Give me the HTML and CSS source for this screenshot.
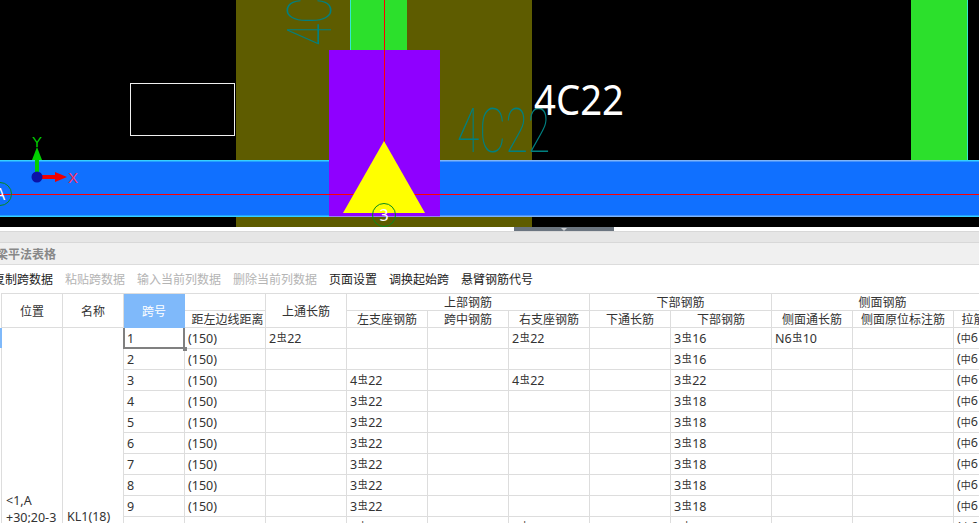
FILE: index.html
```html
<!DOCTYPE html>
<html lang="zh-CN">
<head>
    <meta charset="UTF-8">
    <title>梁平法表格</title>
    <link rel="stylesheet" href="styles.css">
</head>
<body>
    <svg class="canvas" width="979" height="227" viewBox="0 0 979 227">
        <rect class="bg" x="0" y="0" width="979" height="227"/>
        <rect class="olive" x="236" y="0" width="296" height="227"/>
        <rect class="column" x="351" y="0" width="56" height="52"/>
        <rect class="column-edge" x="350" y="0" width="1" height="52"/>
        <rect class="column" x="911" y="0" width="56" height="162"/>
        <rect class="column-edge" x="967" y="0" width="1" height="162"/>
        <text class="cad-text" transform="translate(331 46) rotate(-90)" textLength="93" lengthAdjust="spacingAndGlyphs">4C22</text>
        <text class="cad-text" x="457" y="152" textLength="93" lengthAdjust="spacingAndGlyphs">4C22</text>
        <rect class="beam" x="0" y="160" width="979" height="57"/>
        <rect class="beam-edge" x="0" y="160" width="330" height="1.5"/>
        <rect class="beam-edge" x="0" y="215.5" width="330" height="1.5"/>
        <rect class="beam-edge-soft" x="440" y="160" width="500" height="1.5"/>
        <rect class="beam-edge-soft" x="440" y="215.5" width="500" height="1.5"/>
        <rect class="beam-edge" x="940" y="160" width="39" height="1.5"/>
        <rect class="beam-edge" x="940" y="215.5" width="39" height="1.5"/>
        <rect class="purple" x="329" y="50" width="111" height="167"/>
        <rect class="purple-edge" x="329" y="216" width="111" height="1"/>
        <line class="axis-line" x1="384.5" y1="0" x2="384.5" y2="142"/>
        <line class="axis-line" x1="0" y1="194.5" x2="979" y2="194.5"/>
        <polygon class="yellow" points="384,141 425,213 343,213"/>
        <rect class="selection" x="130.5" y="83.5" width="104" height="52"/>

        <circle class="grid-bubble" cx="0" cy="194" r="11.5"/>
        <text class="bubble-text" x="0" y="200">A</text>
        <circle class="grid-bubble" cx="384" cy="215" r="11.5"/>
        <text class="bubble-text" x="384" y="221">3</text>

        <rect class="arrow-green" x="35" y="158" width="4" height="16"/>
        <polygon class="arrow-green" points="37,147 42,160 32,160"/>
        <rect class="arrow-red" x="41" y="175" width="15" height="4"/>
        <polygon class="arrow-red" points="67,177 55,172 55,182"/>
        <circle class="origin" cx="37" cy="177" r="5.5"/>
        <text class="axis-y" x="37" y="147">Y</text>
        <text class="axis-x" x="73" y="183">X</text>

        <text class="label" x="534" y="115" textLength="90" lengthAdjust="spacingAndGlyphs">4C22</text>
    </svg>

    <div class="splitter"><div class="handle"></div></div>
    <div class="strip"></div>
    <div class="panel-title">梁平法表格</div>

    <div class="toolbar">
        <span>复制跨数据</span>
        <span class="off">粘贴跨数据</span>
        <span class="off">输入当前列数据</span>
        <span class="off">删除当前列数据</span>
        <span>页面设置</span>
        <span>调换起始跨</span>
        <span>悬臂钢筋代号</span>
    </div>

    <div class="table-wrap">
        <div class="row-mark"></div>
        <table class="grid">
            <colgroup>
                <col class="w61"><col class="w61"><col class="w61">
                <col class="w81"><col class="w81"><col class="w81"><col class="w81"><col class="w81"><col class="w81">
                <col class="w101"><col class="w81"><col class="w101"><col class="w40">
            </colgroup>
            <thead>
                <tr>
                    <th rowspan="2" class="tall">位置</th>
                    <th rowspan="2" class="tall">名称</th>
                    <th rowspan="2" class="tall active">跨号</th>
                    <th></th>
                    <th rowspan="2" class="tall">上通长筋</th>
                    <th colspan="3">上部钢筋</th>
                    <th colspan="2">下部钢筋</th>
                    <th colspan="3">侧面钢筋</th>
                </tr>
                <tr>
                    <th class="shift">距左边线距离</th>
                    <th>左支座钢筋</th>
                    <th>跨中钢筋</th>
                    <th>右支座钢筋</th>
                    <th>下通长筋</th>
                    <th>下部钢筋</th>
                    <th>侧面通长筋</th>
                    <th>侧面原位标注筋</th>
                    <th>拉筋</th>
                </tr>
            </thead>
            <tbody>
                <tr>
                    <td rowspan="18" class="place">&lt;1,A<br>+30;20-3<br>00&gt;</td>
                    <td rowspan="18">KL1(18)</td>
                    <td class="selected">1</td><td>(150)</td><td>2<i>虫</i>22</td><td></td><td></td><td>2<i>虫</i>22</td><td></td><td>3<i>虫</i>16</td><td>N6<i>虫</i>10</td><td></td><td>(<b>中</b>6</td>
                </tr>
                <tr><td>2</td><td>(150)</td><td></td><td></td><td></td><td></td><td></td><td>3<i>虫</i>16</td><td></td><td></td><td>(<b>中</b>6</td></tr>
                <tr><td>3</td><td>(150)</td><td></td><td>4<i>虫</i>22</td><td></td><td>4<i>虫</i>22</td><td></td><td>3<i>虫</i>22</td><td></td><td></td><td>(<b>中</b>6</td></tr>
                <tr><td>4</td><td>(150)</td><td></td><td>3<i>虫</i>22</td><td></td><td></td><td></td><td>3<i>虫</i>18</td><td></td><td></td><td>(<b>中</b>6</td></tr>
                <tr><td>5</td><td>(150)</td><td></td><td>3<i>虫</i>22</td><td></td><td></td><td></td><td>3<i>虫</i>18</td><td></td><td></td><td>(<b>中</b>6</td></tr>
                <tr><td>6</td><td>(150)</td><td></td><td>3<i>虫</i>22</td><td></td><td></td><td></td><td>3<i>虫</i>18</td><td></td><td></td><td>(<b>中</b>6</td></tr>
                <tr><td>7</td><td>(150)</td><td></td><td>3<i>虫</i>22</td><td></td><td></td><td></td><td>3<i>虫</i>18</td><td></td><td></td><td>(<b>中</b>6</td></tr>
                <tr><td>8</td><td>(150)</td><td></td><td>3<i>虫</i>22</td><td></td><td></td><td></td><td>3<i>虫</i>18</td><td></td><td></td><td>(<b>中</b>6</td></tr>
                <tr><td>9</td><td>(150)</td><td></td><td>3<i>虫</i>22</td><td></td><td></td><td></td><td>3<i>虫</i>18</td><td></td><td></td><td>(<b>中</b>6</td></tr>
                <tr><td>10</td><td>(150)</td><td></td><td>3<i>虫</i>22</td><td></td><td>3<i>虫</i>22</td><td></td><td>3<i>虫</i>18</td><td></td><td></td><td>(<b>中</b>6</td></tr>
                <tr><td>11</td><td>(150)</td><td></td><td></td><td></td><td></td><td></td><td></td><td></td><td></td><td></td></tr>
                <tr><td>12</td><td>(150)</td><td></td><td></td><td></td><td></td><td></td><td></td><td></td><td></td><td></td></tr>
                <tr><td>13</td><td>(150)</td><td></td><td></td><td></td><td></td><td></td><td></td><td></td><td></td><td></td></tr>
                <tr><td>14</td><td>(150)</td><td></td><td></td><td></td><td></td><td></td><td></td><td></td><td></td><td></td></tr>
                <tr><td>15</td><td>(150)</td><td></td><td></td><td></td><td></td><td></td><td></td><td></td><td></td><td></td></tr>
                <tr><td>16</td><td>(150)</td><td></td><td></td><td></td><td></td><td></td><td></td><td></td><td></td><td></td></tr>
                <tr><td>17</td><td>(150)</td><td></td><td></td><td></td><td></td><td></td><td></td><td></td><td></td><td></td></tr>
                <tr><td>18</td><td>(150)</td><td></td><td></td><td></td><td></td><td></td><td></td><td></td><td></td><td></td></tr>
            </tbody>
        </table>
    </div>
</body>
</html>
```

FILE: styles.css
```css
* {
    box-sizing: border-box;
    margin: 0;
    padding: 0;
}

html, body {
    height: 523px;
    overflow: hidden;
}

body {
    background: #fff;
    color: #333;
    font-family: "Noto Sans", "Noto Sans CJK SC", sans-serif;
    font-size: 12px;
}

/* cad canvas */
.canvas {
    display: block;
}

.bg { fill: #000; }
.olive { fill: #5e5c00; }
.column { fill: #2ce02c; }
.column-edge { fill: #35e8d0; }
.beam { fill: #1070ff; }
.beam-edge { fill: #35d0ff; }
.beam-edge-soft { fill: #7fb4f8; }
.purple { fill: #8f00ff; }
.purple-edge { fill: #9a7cf8; }
.yellow { fill: #ffff00; }
.axis-line { stroke: #ff0000; stroke-width: 1; }
.selection { fill: none; stroke: #f0f0f0; stroke-width: 1; }
.grid-bubble { fill: none; stroke: #0a8a1e; stroke-width: 1; }
.arrow-green { fill: #00d000; }
.arrow-red { fill: #f00000; }
.origin { fill: #0a12a8; }

.cad-text {
    fill: #008080;
    font-family: Roboto, sans-serif;
    font-weight: 100;
    font-size: 62px;
}

.bubble-text {
    fill: #fff;
    font-size: 16px;
    text-anchor: middle;
}

.axis-y, .axis-x {
    font-family: "Liberation Sans", sans-serif;
    font-size: 15px;
    text-anchor: middle;
}

.axis-y { fill: #00d000; }
.axis-x { fill: #ff3060; }

.label {
    fill: #fff;
    font-family: "Noto Sans", sans-serif;
    font-size: 42px;
}

/* splitter + panel header */
.splitter {
    height: 4px;
    padding-left: 514px;
}

.handle {
    display: flex;
    justify-content: center;
    width: 100px;
    height: 4px;
    background: #6b7580;
}

.handle::after {
    content: "";
    width: 0;
    height: 0;
    margin-top: 1px;
    border-left: 3px solid transparent;
    border-right: 3px solid transparent;
    border-top: 3px solid #c8ccd0;
}

.strip {
    height: 12px;
    background: #e6e6e6;
    border-top: 1px solid #d8d8d8;
    border-bottom: 1px solid #d8d8d8;
}

.panel-title {
    height: 22px;
    line-height: 23px;
    margin-left: -4px;
    color: #888;
    font-weight: 700;
    background: #f0f0f0;
    border-bottom: 1px solid #dcdcdc;
}

.toolbar {
    display: flex;
    gap: 12px;
    height: 28px;
    line-height: 30px;
    margin-left: -7px;
    color: #222;
}

.toolbar .off {
    color: #b4b4b4;
}

/* table */
.table-wrap {
    position: relative;
    padding-left: 1px;
}

.row-mark {
    position: absolute;
    left: 0;
    top: 35px;
    width: 2px;
    height: 20px;
    background: #7fb9fa;
}

.grid {
    table-layout: fixed;
    width: 992px;
    border-collapse: separate;
    border-spacing: 0;
    border-left: 1px solid #ddd;
    border-top: 1px solid #ddd;
}

.w40 { width: 40px; }
.w61 { width: 61px; }
.w81 { width: 81px; }
.w101 { width: 101px; }

th, td {
    border-right: 1px solid #ddd;
    border-bottom: 1px solid #ddd;
    overflow: hidden;
    white-space: nowrap;
}

th {
    height: 17px;
    padding-top: 1px;
    line-height: 15px;
    font-weight: 400;
    text-align: center;
    color: #333;
}

th.tall {
    padding-top: 2px;
}

th.shift {
    padding-left: 5px;
}

th.active {
    background: #7fb9fa;
    border-color: #7fb9fa;
    color: #fff;
}

td {
    height: 21px;
    padding: 0 4px 0 3px;
    font-size: 12.5px;
    line-height: 17px;
}

td:empty {
    padding: 0;
}

td[rowspan] {
    padding: 0 4px;
}

td.place {
    padding-top: 2px;
}

td i {
    font-style: normal;
    font-size: 10px;
    margin: 0 0.5px;
    vertical-align: 2px;
}

td b {
    font-weight: 400;
    font-size: 10px;
}

td.selected {
    position: relative;
    overflow: visible;
}

td.selected::after {
    content: "";
    position: absolute;
    top: 0;
    left: -1px;
    right: -1px;
    bottom: -1px;
    border: 2px solid #808080;
    border-top: 0;
}

td.selected::before {
    content: "";
    position: absolute;
    right: -3px;
    bottom: -3px;
    width: 4px;
    height: 4px;
    background: #808080;
}
```
